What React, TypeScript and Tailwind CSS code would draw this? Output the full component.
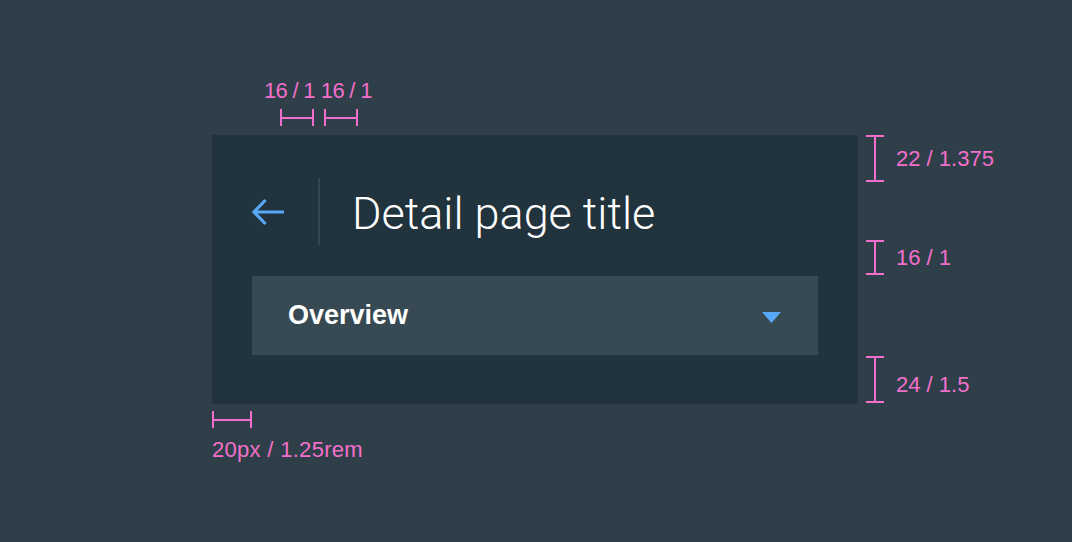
import React from "react";

function HBracket({ className }: { className: string }) {
  return (
    <div className={`flex items-center h-[17px] ${className}`}>
      <div className="w-[2px] h-[17px] bg-[#f46fcb]" />
      <div className="flex-1 h-[2px] bg-[#f46fcb]" />
      <div className="w-[2px] h-[17px] bg-[#f46fcb]" />
    </div>
  );
}

function VBracket({ className }: { className: string }) {
  return (
    <div className={`flex flex-col items-center w-[18px] shrink-0 ${className}`}>
      <div className="h-[2px] w-[18px] bg-[#f46fcb]" />
      <div className="flex-1 w-[2px] bg-[#f46fcb]" />
      <div className="h-[2px] w-[18px] bg-[#f46fcb]" />
    </div>
  );
}

const label = "text-[22px] leading-none text-[#f46fcb] whitespace-nowrap";

export default function App() {
  return (
    <div
      className="w-full h-[542px] bg-[#2e3f49] pl-[212px] pt-[80px] overflow-hidden flex flex-col items-start"
      style={{ fontFamily: "'Liberation Sans', Arial, sans-serif" }}
    >
      {/* top annotations */}
      <div className={`flex gap-[6px] ml-[52px] h-[22px] tracking-[-0.7px] ${label}`}>
        <span>16 / 1</span>
        <span>16 / 1</span>
      </div>
      <div className="flex gap-[10px] ml-[68px] mt-[7px]">
        <HBracket className="w-[34px]" />
        <HBracket className="w-[34px]" />
      </div>

      {/* panel + right annotations */}
      <div className="flex items-start mt-[9px]">
        <div className="w-[646px] bg-[#21333d] px-10 pt-[43px] pb-[49px]">
          <div className="flex items-center h-[67px]">
            <svg width="34" height="30" viewBox="0 0 34 30" className="shrink-0 -ml-[1px]">
              <path
                d="M33 15 H3 M14.5 3 L3 15 L14.5 27"
                fill="none"
                stroke="#59a8f6"
                strokeWidth="3.2"
              />
            </svg>
            <div className="ml-[33px] w-[2px] h-[67px] bg-[#34464f]" />
            <div
              className="ml-[32px] text-[45px] font-light text-white leading-none mt-[4px]"
              style={{ fontFamily: "Roboto, 'Liberation Sans', sans-serif" }}
            >
              Detail page title
            </div>
          </div>
          <div className="mt-[31px] h-[79px] bg-[#374952] flex items-center justify-between pl-9 pr-[37px]">
            <span className="text-[27px] font-bold text-white leading-none">Overview</span>
            <svg width="19" height="11" viewBox="0 0 19 11" className="mt-[4px]">
              <path d="M0 0 H19 L9.5 11 Z" fill="#59a8f6" />
            </svg>
          </div>
        </div>

        <div className="ml-[8px] flex flex-col">
          <div className="flex items-center gap-[12px]">
            <VBracket className="h-[47px]" />
            <span className={label}>22 / 1.375</span>
          </div>
          <div className="flex items-center gap-[12px] mt-[58px]">
            <VBracket className="h-[35px]" />
            <span className={label}>16 / 1</span>
          </div>
          <div className="flex items-center gap-[12px] mt-[81px]">
            <VBracket className="h-[47px]" />
            <span className={`${label} mt-[11px]`}>24 / 1.5</span>
          </div>
        </div>
      </div>

      {/* bottom annotation */}
      <HBracket className="w-[40px] mt-[7px]" />
      <span className={`${label} mt-[11px] tracking-[0.3px]`}>20px / 1.25rem</span>
    </div>
  );
}
